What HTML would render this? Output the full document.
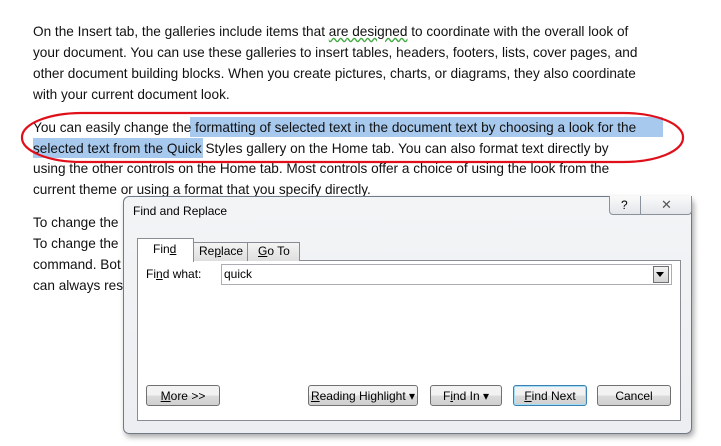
<!DOCTYPE html>
<html><head><meta charset="utf-8"><style>
body{margin:0;width:721px;height:446px;background:#fff;position:relative;overflow:hidden;font-family:"Liberation Sans",sans-serif}
.l{position:absolute;left:33px;font-size:14px;color:#111;white-space:nowrap;transform-origin:0 0;transform:scaleX(.972);line-height:16px}
.dlg{position:absolute;left:123px;top:196px;width:567px;height:236px;border:1px solid #6e7a86;border-radius:6px;background:linear-gradient(#f3f4f6,#eceef1);box-shadow:2px 3px 6px rgba(0,0,0,.35)}
.ab{position:absolute;font-size:12px;color:#000;font-family:"Liberation Sans",sans-serif}
.btn{position:absolute;top:188px;height:21px;border:1px solid #707070;border-radius:3px;background:linear-gradient(#f2f2f2 50%,#dcdcdc 50%,#cfcfcf);font-size:12px;text-align:center;line-height:21px;box-sizing:border-box}
</style></head><body>
<div class="l" style="top:23px">On the Insert tab, the galleries include items that <span style="text-decoration:underline wavy #4a4">are designed</span> to coordinate with the overall look of</div>
<div class="l" style="top:44px">your document. You can use these galleries to insert tables, headers, footers, lists, cover pages, and</div>
<div class="l" style="top:65px">other document building blocks. When you create pictures, charts, or diagrams, they also coordinate</div>
<div class="l" style="top:86px">with your current document look.</div>
<div style="position:absolute;left:190px;top:117px;width:473px;height:20px;background:#a8c9ee"></div>
<div style="position:absolute;left:33px;top:138px;width:170px;height:20px;background:#a8c9ee"></div>
<div class="l" style="top:119px">You can easily change the formatting of selected text in the document text by choosing a look for the</div>
<div class="l" style="top:140px">selected text from the Quick Styles gallery on the Home tab. You can also format text directly by</div>
<div class="l" style="top:160px">using the other controls on the Home tab. Most controls offer a choice of using the look from the</div>
<div class="l" style="top:181px">current theme or using a format that you specify directly.</div>
<div class="l" style="top:214px">To change the</div>
<div class="l" style="top:235px">To change the</div>
<div class="l" style="top:256px">command. Bot</div>
<div class="l" style="top:277px">can always rest</div>
<svg style="position:absolute;left:0;top:0" width="721" height="446"><rect x="22" y="113" width="661" height="49" rx="60" ry="24" fill="none" stroke="#e0101a" stroke-width="2.2"/></svg>
<div class="dlg">
 <div class="ab" style="left:9px;top:7px">Find and Replace</div>
 <div style="position:absolute;left:485px;top:-1px;width:81px;height:18px;border:1px solid #8a929c;border-top:none;border-radius:0 0 4px 4px;background:linear-gradient(#fafafa,#e4e6ea)"></div>
 <div style="position:absolute;left:516px;top:-1px;width:1px;height:18px;background:#8a929c"></div>
 <div class="ab" style="left:497px;top:1px;font-size:12px">?</div>
 <div class="ab" style="left:537px;top:0px;font-size:13px;color:#555">✕</div>
 <div style="position:absolute;left:13px;top:63px;width:542px;height:159px;border:1px solid #898c95;background:#fff"></div>
 <div style="position:absolute;left:13px;top:41px;width:55px;height:23px;border:1px solid #898c95;border-bottom:none;background:#fff"></div>
 <div style="position:absolute;left:69px;top:45px;width:53px;height:18px;border:1px solid #898c95;border-bottom:none;background:linear-gradient(#f4f4f4,#dedede)"></div>
 <div style="position:absolute;left:123px;top:45px;width:51px;height:18px;border:1px solid #898c95;border-bottom:none;background:linear-gradient(#f4f4f4,#dedede)"></div>
 <div class="ab" style="left:29px;top:45px">Fin<u>d</u></div>
 <div class="ab" style="left:75px;top:47px">Re<u>p</u>lace</div>
 <div class="ab" style="left:134px;top:47px"><u>G</u>o To</div>
 <div class="ab" style="left:22px;top:70px">Fi<u>n</u>d what:</div>
 <div style="position:absolute;left:97px;top:67px;width:449px;height:19px;border:1px solid #abadb3;background:#fff"></div>
 <div class="ab" style="left:100px;top:70px">quick</div>
 <div style="position:absolute;left:529px;top:69px;width:14px;height:15px;border:1px solid #707070;background:linear-gradient(#f2f2f2,#d4d4d4)"></div>
 <div style="position:absolute;left:532px;top:75px;width:0;height:0;border-left:4px solid transparent;border-right:4px solid transparent;border-top:5px solid #000"></div>
 <div class="btn" style="left:22px;width:74px"><u>M</u>ore &gt;&gt;</div>
 <div class="btn" style="left:184px;width:110px"><u>R</u>eading Highlight ▾</div>
 <div class="btn" style="left:306px;width:72px">F<u>i</u>nd In ▾</div>
 <div class="btn" style="left:389px;width:74px;border-color:#3c7fb1;box-shadow:inset 0 0 0 1px #9fe0f8"><u>F</u>ind Next</div>
 <div class="btn" style="left:473px;width:74px">Cancel</div>
</div>
</body></html>
